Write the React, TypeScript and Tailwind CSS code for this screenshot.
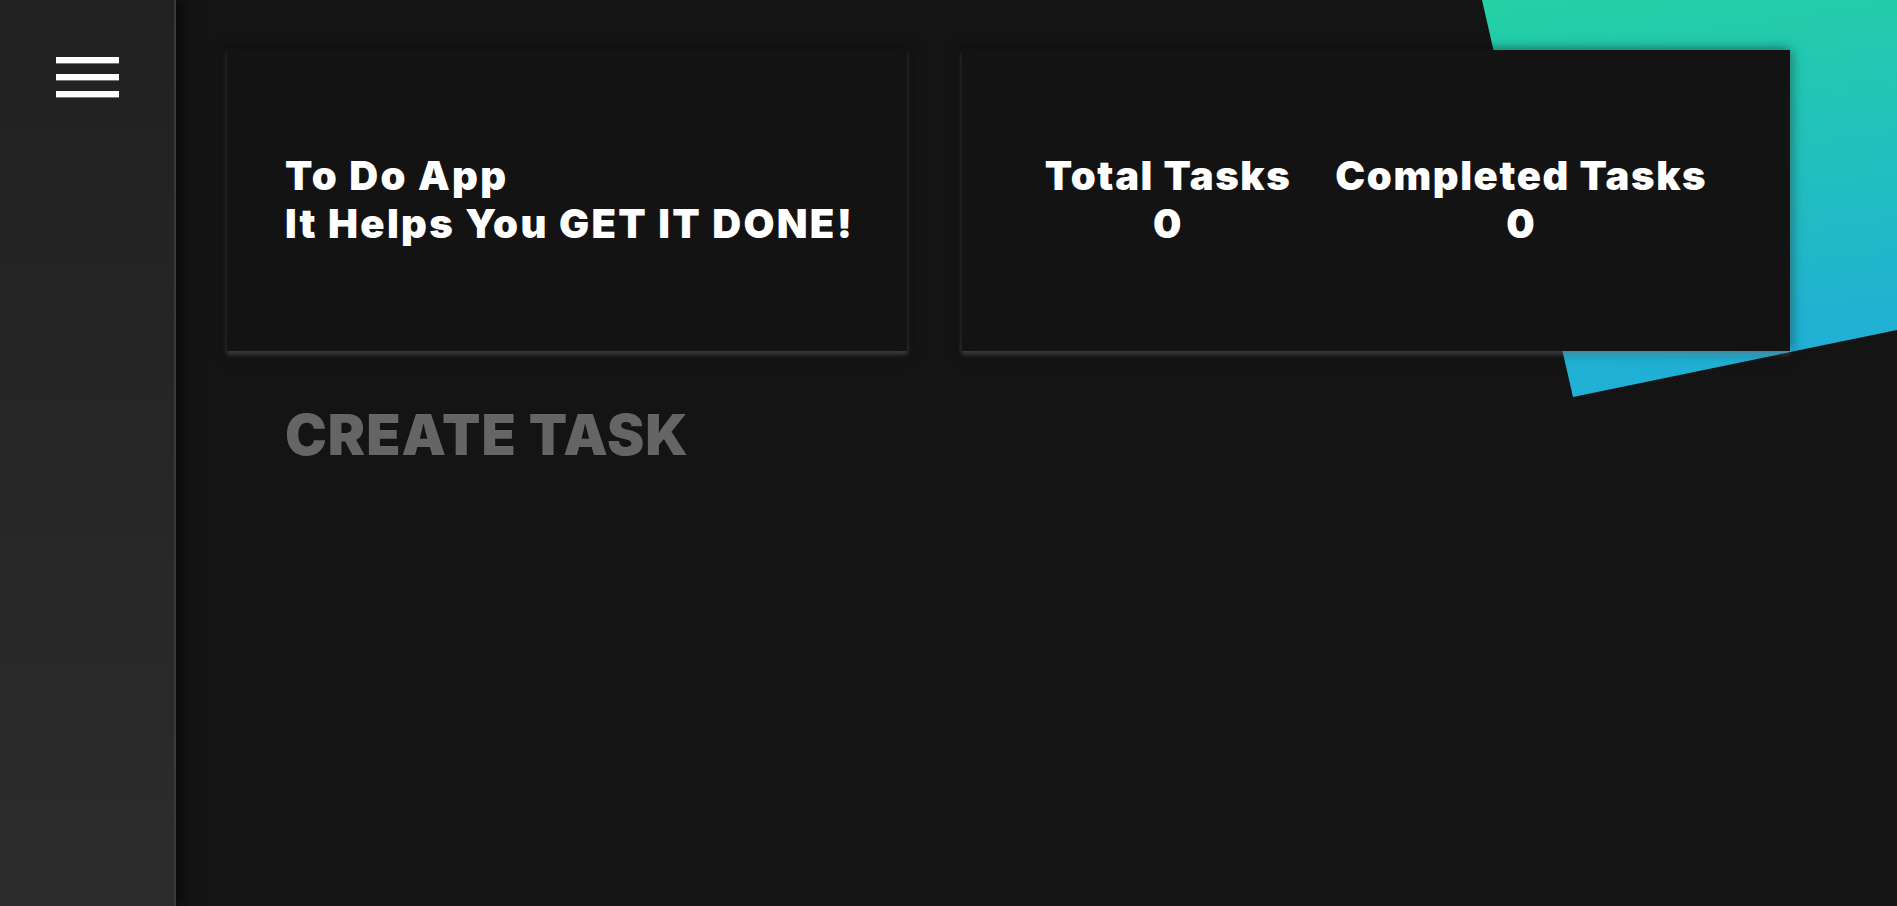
import React from 'react';

const font = { fontFamily: 'Inter, "Open Sans", sans-serif' };

function Decoration() {
  return (
    <svg
      className="absolute top-0 right-0 pointer-events-none"
      width="415"
      height="400"
      viewBox="0 0 415 400"
    >
      <defs>
        <linearGradient id="deco" x1="0" y1="0" x2="0.15" y2="1">
          <stop offset="0%" stopColor="#24d1a4" />
          <stop offset="100%" stopColor="#20afd6" />
        </linearGradient>
      </defs>
      <polygon points="0,0 415,0 415,330 91,397" fill="url(#deco)" />
    </svg>
  );
}

function Stat({ label, value }: { label: string; value: number }) {
  return (
    <div className="flex flex-col items-center">
      <span>{label}</span>
      <span>{value}</span>
    </div>
  );
}

export default function App() {
  return (
    <div className="flex h-screen w-full bg-[#141414] text-white overflow-hidden" style={font}>
      <aside className="relative z-10 w-[176px] shrink-0 bg-gradient-to-b from-[#212121] to-[#2c2c2c] border-r-2 border-[#3a3a3a] shadow-[6px_0_14px_rgba(0,0,0,0.55)]">
        <button className="ml-[56px] mt-[57px] flex flex-col gap-[11px]">
          <span className="block h-[6px] w-[63px] bg-white shadow-[0_1px_0_#777]" />
          <span className="block h-[6px] w-[63px] bg-white shadow-[0_1px_0_#777]" />
          <span className="block h-[6px] w-[63px] bg-white shadow-[0_1px_0_#777]" />
        </button>
      </aside>

      <main className="relative flex-1 pl-[51px] pt-[50px]">
        <Decoration />
        <div className="relative flex gap-[55px]">
          <section className="flex h-[301px] w-[680px] items-center bg-[#131313] pl-[58px] pb-[2px] text-[40px] font-black tracking-[2.3px] leading-[48px] shadow-[0_0_12px_rgba(0,0,0,0.6),0_3px_5px_rgba(255,255,255,0.28)]">
            <div>
              <div>To Do App</div>
              <div>It Helps You GET IT DONE!</div>
            </div>
          </section>
          <section className="flex h-[301px] w-[828px] items-center justify-center gap-[44px] bg-[#131313] pb-[2px] text-[40px] font-black tracking-[1.6px] leading-[48px] shadow-[0_0_12px_rgba(0,0,0,0.6),0_3px_5px_rgba(255,255,255,0.28)]">
            <Stat label="Total Tasks" value={0} />
            <Stat label="Completed Tasks" value={0} />
          </section>
        </div>
        <h2 className="relative ml-[58px] mt-[50px] text-[56px] font-black tracking-[1px] leading-[68px] text-[#656565]">
          CREATE TASK
        </h2>
      </main>
    </div>
  );
}
